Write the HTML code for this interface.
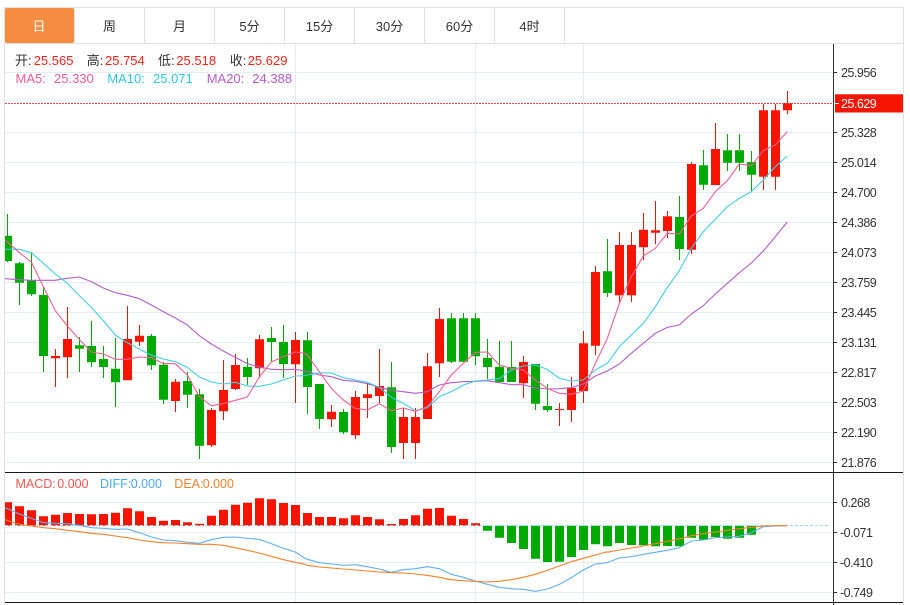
<!DOCTYPE html>
<html lang="zh"><head><meta charset="utf-8"><title>K线图</title>
<style>
html,body{margin:0;padding:0;background:#fff;width:910px;height:605px;overflow:hidden}
svg{display:block}
text{font-family:"Liberation Sans","Noto Sans CJK SC",sans-serif}
.t{font-size:13px;fill:#333;text-anchor:middle}
.a{font-size:12.5px;fill:#333;letter-spacing:-.5px}
.h{font-size:13px;fill:#333}
.r{font-size:13px;fill:#f5231a}
.z polyline{fill:none;stroke-width:3.3;stroke-linejoin:round}
</style></head>
<body>
<svg width="910" height="605" viewBox="0 0 910 605" xmlns="http://www.w3.org/2000/svg">
<defs><clipPath id="c"><rect x="5" y="44" width="828" height="560"/></clipPath></defs>

<!-- frame & tabs -->
<path d="M4.5 605V7.5H903.5V605M5 43.5H903.5M74.5 8V43M144.5 8V43M214.5 8V43M284.5 8V43M354.5 8V43M424.5 8V43M494.5 8V43M564.5 8V43" fill="none" stroke="#e0e0e0"/>
<rect x="5" y="8" width="69" height="35" rx="2" fill="#f58c40"/>
<text class="t" x="39" y="31" style="fill:#fff">日</text>
<text class="t" x="109.500" y="31">周</text>
<text class="t" x="179.500" y="31">月</text>
<text class="t" x="249.500" y="31">5分</text>
<text class="t" x="319.500" y="31">15分</text>
<text class="t" x="389.500" y="31">30分</text>
<text class="t" x="459.500" y="31">60分</text>
<text class="t" x="529.500" y="31">4时</text>

<!-- grid -->
<path d="M5 72.500H833M5 132.500H833M5 162.500H833M5 192.500H833M5 222.500H833M5 252.500H833M5 282.500H833M5 312.500H833M5 342.500H833M5 372.500H833M5 402.500H833M5 432.500H833M5 462.500H833M5 502.500H833M5 532.500H833M5 562.500H833M5 592.500H833M295.500 44V602M475.500 44V602M583.500 44V602" fill="none" stroke="#e3edf3"/>

<g clip-path="url(#c)">
<!-- green candles -->
<path stroke="#02a902" fill="none" d="M7.500 214V262M19.500 262V305M31.500 252V296M43.500 287V372M79.500 337V372M91.500 321V367M103.500 346V378M115.500 338V407M151.500 334V370M163.500 362V404M187.500 372V408M199.500 389V459M247.500 358V385M271.500 327V362M283.500 325V378M307.500 332V414M319.500 384V429M343.500 409V434M391.500 362V453M451.500 313V363M463.500 313V362M475.500 313V365M487.500 339V379M499.500 341V382M511.500 341V382M535.500 364V410M547.500 384V412M607.500 239V297M679.500 196V260M703.500 150V190M727.500 134V171M739.500 134V171M751.500 151V191"/>
<path fill="#02a902" d="M3 235.700h9V261h-9zM15 263.300h9V282.700h-9zM27 280.300h9V294.300h-9zM39 295h9V356h-9zM75 345.300h9V348.700h-9zM87 346h9V362.300h-9zM99 359h9V367h-9zM111 368.700h9V382.300h-9zM147 336h9V365.300h-9zM159 364.700h9V399.700h-9zM183 381h9V394.700h-9zM195 394.300h9V445.700h-9zM243 366.700h9V377h-9zM267 338h9V342h-9zM279 342h9V364h-9zM303 340.300h9V387h-9zM315 384h9V419h-9zM339 412h9V432.300h-9zM387 387.300h9V447h-9zM447 318.300h9V361.700h-9zM459 318.300h9V361.700h-9zM471 318.300h9V356.300h-9zM483 358h9V367h-9zM495 366.700h9V382h-9zM507 367h9V382h-9zM531 364h9V403.700h-9zM543 406h9V410h-9zM603 271.300h9V293h-9zM675 217h9V249h-9zM699 165.300h9V184.700h-9zM723 150.300h9V162.700h-9zM735 150.300h9V162.700h-9zM747 162h9V174.700h-9z"/>
<!-- red candles -->
<path stroke="#f51400" fill="none" d="M55.500 349V387M67.500 307V378M127.500 306V380M139.500 325V346M175.500 379V412M211.500 408V447M223.500 360V420M235.500 354V390M259.500 335V378M295.500 332V403M331.500 405V427M355.500 391V439M367.500 383V418M379.500 349V403M403.500 408V459M415.500 408V459M427.500 353V419M439.500 308V377M523.500 356V398M559.500 403V426M571.500 377V422M583.500 331V403M595.500 266V355M619.500 232V302M631.500 232V302M643.500 213V260M655.500 201V244M667.500 211V238M691.500 162V254M715.500 123V185M763.500 104V190M775.500 104V190M787.500 91V114"/>
<path fill="#f51400" d="M51 356h9V358.300h-9zM63 339h9V357.300h-9zM123 339h9V380.300h-9zM135 335.700h9V341.700h-9zM171 381.700h9V401h-9zM207 410h9V445.300h-9zM219 390h9V411.300h-9zM231 365h9V389h-9zM255 339.300h9V368.300h-9zM291 340h9V364.300h-9zM327 411.700h9V419.300h-9zM351 397h9V435.300h-9zM363 394.300h9V398h-9zM375 386h9V396h-9zM399 417h9V443h-9zM411 417h9V443h-9zM423 366.300h9V419h-9zM435 319h9V363.300h-9zM519 362h9V383.300h-9zM555 409h9V410h-9zM567 388h9V410h-9zM579 343.300h9V391h-9zM591 272h9V345.700h-9zM615 245h9V295.300h-9zM627 245h9V295.300h-9zM639 229.700h9V247.300h-9zM651 230.300h9V232.700h-9zM663 216.300h9V231h-9zM687 164h9V249.700h-9zM711 149h9V185h-9zM759 110.300h9V176.700h-9zM771 110.300h9V176.700h-9zM783 103h9V110.300h-9z"/>

<!-- MA lines -->
<g class="z" transform="translate(0 200) scale(.33333)">
<polyline stroke="#b35fca" points="15,236 58,239 94,241 130,241 166,241 202,235 238,231 274,245 310,264 346,278 382,286 418,296 454,315 490,335 526,354 562,375 598,407 634,432 670,453 706,472 742,491 778,501 814,508 850,509 886,508 915,513"/>
<polyline stroke="#3fcfe6" points="15,148 58,148 94,158 130,190 166,222 202,250 238,287 274,322 310,362 346,405 382,428 418,447 454,466 490,477 526,485 562,502 598,531 634,546 670,552 706,547 742,558 778,559 814,552 850,540 886,528 915,527"/>
<polyline stroke="#f0608f" points="15,120 22,125 58,158 94,186 130,260 166,332 202,378 238,418 274,456 310,462 346,478 382,478 418,471 454,473 490,491 526,491 562,525 598,590 634,617 670,611 706,601 742,591 778,531 814,486 850,470 886,456 915,460"/>
</g>
<g class="z" transform="translate(305 280) scale(.33333)">
<polyline stroke="#b35fca" points="0,273 7,275 43,285 79,290 115,301 151,304 187,311 223,322 259,331 295,335 331,340 367,335 403,315 439,308 475,305 511,304 547,302 583,308 619,314 655,314 691,324 727,327 763,326 799,323 835,312"/>
<polyline stroke="#3fcfe6" points="0,287 7,285 43,279 79,279 115,293 151,300 187,307 223,322 259,352 295,370 331,392 367,383 403,350 439,335 475,315 511,303 547,300 583,296 619,270 655,258 691,255 727,268 763,295 799,303 835,300"/>
<polyline stroke="#f0608f" points="0,220 7,225 43,275 79,325 115,360 151,385 187,390 223,371 259,392 295,384 331,394 367,380 403,335 439,285 475,250 511,217 547,216 583,255 619,265 655,270 691,300 727,325 763,340 799,343 835,333"/>
</g>
<g class="z" transform="translate(580 80) scale(.33333)">
<polyline stroke="#b35fca" points="10,912 46,888 82,873 118,852 154,820 190,790 226,760 262,742 298,735 334,702 370,677 406,642 442,610 478,578 514,549 550,513 586,470 622,426"/>
<polyline stroke="#3fcfe6" points="10,900 46,870 82,850 118,800 154,765 190,730 226,680 262,622 298,572 334,505 370,455 406,418 442,380 478,355 514,335 550,300 586,260 622,228"/>
<polyline stroke="#f0608f" points="10,933 46,850 82,775 118,670 154,590 190,528 226,505 262,460 298,462 334,408 370,385 406,335 442,302 478,252 514,257 550,212 586,195 622,155"/>
</g>

<!-- MACD bars -->
<path fill="#f51400" d="M3 502.300h9V525.700h-9zM15 506.300h9V525.700h-9zM27 510.300h9V525.700h-9zM39 516.300h9V525.700h-9zM51 514.700h9V525.700h-9zM63 513h9V525.700h-9zM75 514h9V525.700h-9zM87 514.300h9V525.700h-9zM99 514h9V525.700h-9zM111 512.700h9V525.700h-9zM123 508.300h9V525.700h-9zM135 511.300h9V525.700h-9zM147 517h9V525.700h-9zM159 520.700h9V525.700h-9zM171 520h9V525.700h-9zM183 522.300h9V525.700h-9zM195 523.700h9V525.700h-9zM207 515.700h9V525.700h-9zM219 509.700h9V525.700h-9zM231 504.700h9V525.700h-9zM243 502.700h9V525.700h-9zM255 498.300h9V525.700h-9zM267 499.300h9V525.700h-9zM279 503h9V525.700h-9zM291 505h9V525.700h-9zM303 513h9V525.700h-9zM315 517h9V525.700h-9zM327 517h9V525.700h-9zM339 518.300h9V525.700h-9zM351 515.300h9V525.700h-9zM363 517h9V525.700h-9zM375 519.300h9V525.700h-9zM387 524h9V525.700h-9zM399 519h9V525.700h-9zM411 515.300h9V525.700h-9zM423 508.700h9V525.700h-9zM435 508h9V525.700h-9zM447 515.700h9V525.700h-9zM459 519h9V525.700h-9zM471 523.300h9V525.700h-9z"/>
<path fill="#02a902" d="M483 525.700h9V530.700h-9zM495 525.700h9V537.700h-9zM507 525.700h9V543h-9zM519 525.700h9V549h-9zM531 525.700h9V558.700h-9zM543 525.700h9V562h-9zM555 525.700h9V561.700h-9zM567 525.700h9V557h-9zM579 525.700h9V550h-9zM591 525.700h9V544.300h-9zM603 525.700h9V546.300h-9zM615 525.700h9V543h-9zM627 525.700h9V545h-9zM639 525.700h9V545.300h-9zM651 525.700h9V546.300h-9zM663 525.700h9V546h-9zM675 525.700h9V546.300h-9zM687 525.700h9V537.700h-9zM699 525.700h9V539.700h-9zM711 525.700h9V537h-9zM723 525.700h9V538.700h-9zM735 525.700h9V537.700h-9zM747 525.700h9V534.700h-9z"/>
<path d="M5 525.500H830" stroke="#9adcf2" stroke-dasharray="3 2" fill="none"/>

<!-- DIFF / DEA -->
<g class="z" transform="translate(0 465) scale(.33333)">
<polyline stroke="#60b0f4" points="15,128 58,147 94,160 130,173 166,175 202,176 238,181 274,188 310,190 346,193 382,192 418,203 454,216 490,225 526,227 562,232 598,235 634,224 670,217 706,216 742,220 778,223 814,236 850,250 886,261 915,280"/>
<polyline stroke="#f5812b" points="15,164 58,178 94,183 130,188 166,191 202,196 238,200 274,205 310,208 346,213 382,218 418,225 454,230 490,233 526,234 562,236 598,238 634,238 670,241 706,248 742,256 778,264 814,274 850,284 886,292 915,298"/>
</g>
<g class="z" transform="translate(305 465) scale(.33333)">
<polyline stroke="#60b0f4" points="0,280 7,283 43,293 79,297 115,301 151,299 187,305 223,312 259,322 295,314 331,311 367,305 403,311 439,328 475,337 511,348 547,358 583,367 619,371 655,373 691,379 727,372 763,358 799,338 835,315 871,297 907,293"/>
<polyline stroke="#f5812b" points="0,298 7,301 43,306 79,309 115,312 151,315 187,318 223,321 259,323 295,324 331,327 367,331 403,337 439,344 475,347 511,349 547,351 583,349 619,344 655,337 691,328 727,316 763,303 799,290 835,280 871,270 907,260"/>
</g>
<g class="z" transform="translate(605 465) scale(.33333)">
<polyline stroke="#60b0f4" points="6,293 43,279 79,275 115,268 151,262 187,256 223,248 259,228 295,225 331,218 367,216 403,214 439,203 475,185 511,183 547,182"/>
<polyline stroke="#f5812b" points="6,262 43,255 79,249 115,243 151,236 187,229 223,222 259,212 295,206 331,201 367,196 403,191 439,187 475,183 511,182 547,182"/>
</g>
</g>

<!-- last price dotted line -->
<path d="M5 103.500H833" stroke="#ee4450" stroke-dasharray="2 1" fill="none"/>

<!-- axis & panel lines -->
<path d="M5 472.500H903M5 602.500H903" stroke="#1a1a1a" fill="none"/>
<path d="M833.500 44V605M833 72.500h4M833 132.500h4M833 162.500h4M833 192.500h4M833 222.500h4M833 252.500h4M833 282.500h4M833 312.500h4M833 342.500h4M833 372.500h4M833 402.500h4M833 432.500h4M833 462.500h4M833 502.500h4M833 532.500h4M833 562.500h4M833 592.500h4" stroke="#333" fill="none"/>

<!-- price tag -->
<rect x="835" y="94.300" width="68" height="18.200" fill="#f51400"/>
<path d="M835 103.500h4" stroke="#fff"/>
<text class="a" x="841" y="108" style="fill:#fff">25.629</text>

<!-- axis labels -->
<text class="a" x="841" y="77">25.956</text>
<text class="a" x="841" y="137">25.328</text>
<text class="a" x="841" y="167">25.014</text>
<text class="a" x="841" y="197">24.700</text>
<text class="a" x="841" y="227">24.386</text>
<text class="a" x="841" y="257">24.073</text>
<text class="a" x="841" y="287">23.759</text>
<text class="a" x="841" y="317">23.445</text>
<text class="a" x="841" y="347">23.131</text>
<text class="a" x="841" y="377">22.817</text>
<text class="a" x="841" y="407">22.503</text>
<text class="a" x="841" y="437">22.190</text>
<text class="a" x="841" y="467">21.876</text>
<text class="a" x="841" y="507">0.268</text>
<text class="a" x="840" y="537">-0.071</text>
<text class="a" x="840" y="567">-0.410</text>
<text class="a" x="840" y="597">-0.749</text>

<!-- OHLC legend -->
<text class="h" x="15" y="65">开:</text><text class="r" x="33.700" y="65">25.565</text>
<text class="h" x="86.700" y="65">高:</text><text class="r" x="105" y="65">25.754</text>
<text class="h" x="158" y="65">低:</text><text class="r" x="176.300" y="65">25.518</text>
<text class="h" x="229.700" y="65">收:</text><text class="r" x="247.700" y="65">25.629</text>

<text class="h" x="15.500" y="83" style="fill:#ef5b96">MA5:</text><text class="h" x="54" y="83" style="fill:#ef5b96">25.330</text>
<text class="h" x="107.300" y="83" style="fill:#2fc6e0">MA10:</text><text class="h" x="153" y="83" style="fill:#2fc6e0">25.071</text>
<text class="h" x="206.700" y="83" style="fill:#b55cc9">MA20:</text><text class="h" x="252.300" y="83" style="fill:#b55cc9">24.388</text>

<!-- MACD legend -->
<text class="h" x="15.500" y="488" style="fill:#f5564e;font-size:12.500px">MACD:</text><text class="h" x="57.300" y="488" style="fill:#f5564e;font-size:12.500px">0.000</text>
<text class="h" x="100" y="488" style="fill:#4ba8f2;font-size:12.500px">DIFF:</text><text class="h" x="130.700" y="488" style="fill:#4ba8f2;font-size:12.500px">0.000</text>
<text class="h" x="174.300" y="488" style="fill:#f5812b;font-size:12.500px">DEA:</text><text class="h" x="202.700" y="488" style="fill:#f5812b;font-size:12.500px">0.000</text>
</svg>
</body></html>
